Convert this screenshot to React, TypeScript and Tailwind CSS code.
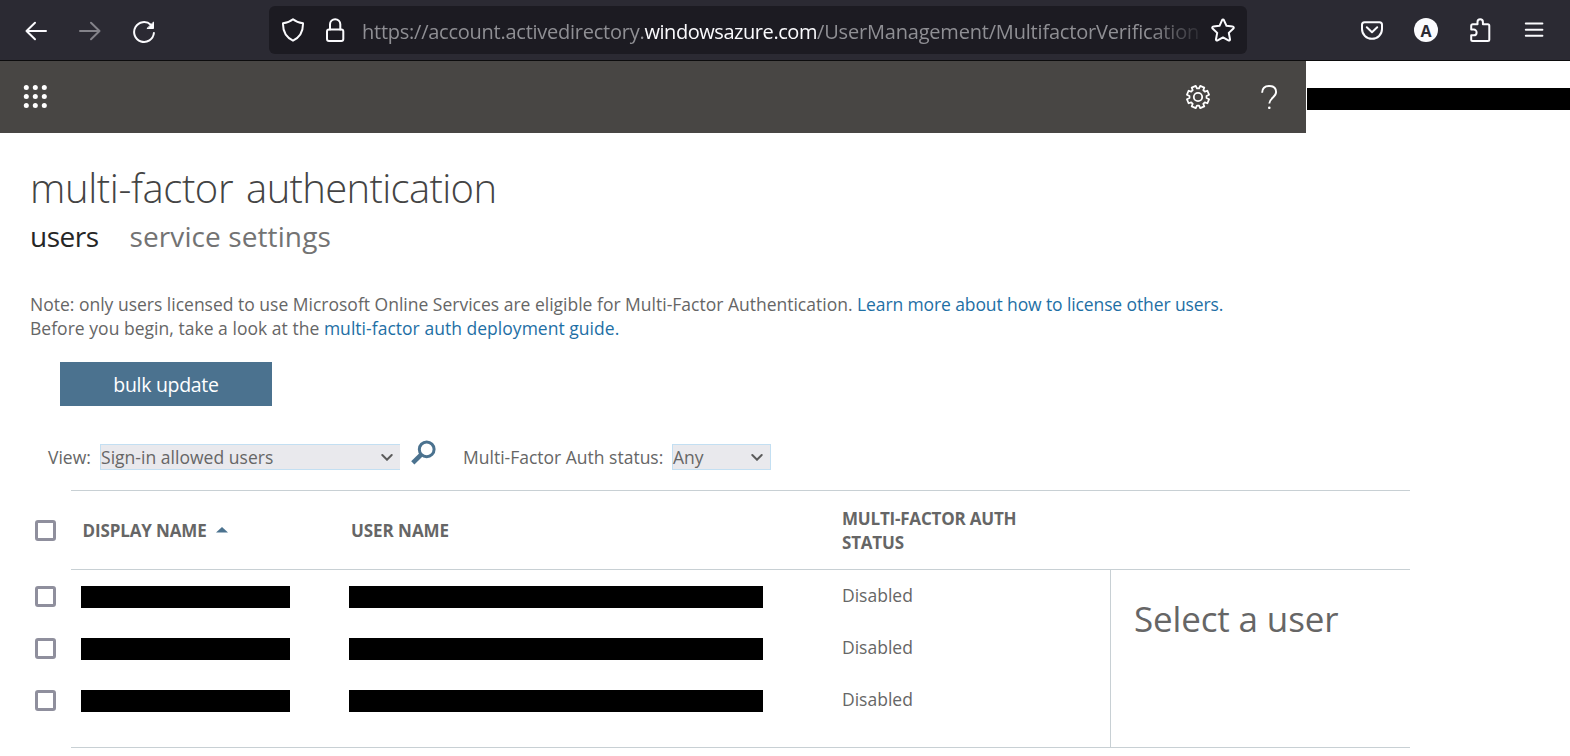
import type { ReactNode } from "react";

const rows = [
  { id: 1, status: "Disabled" },
  { id: 2, status: "Disabled" },
  { id: 3, status: "Disabled" },
];

type IconProps = { className?: string; size?: number; children: ReactNode; width?: number };

function Icon({ className = "", size = 24, width = 2, children }: IconProps) {
  return (
    <svg
      className={`block shrink-0 ${className}`}
      width={size}
      height={size}
      viewBox="0 0 24 24"
      fill="none"
      stroke="currentColor"
      strokeWidth={width}
      strokeLinecap="round"
      strokeLinejoin="round"
    >
      {children}
    </svg>
  );
}

function gearPoints() {
  const pts: string[] = [];
  for (let i = 0; i < 8; i++) {
    const mid = 22.5 + i * 45;
    const corners: [number, number][] = [
      [-15.5, 8.6],
      [-11, 11.3],
      [11, 11.3],
      [15.5, 8.6],
    ];
    for (const [off, r] of corners) {
      const a = ((mid + off) * Math.PI) / 180;
      pts.push(`${(12 + r * Math.cos(a)).toFixed(2)},${(12 + r * Math.sin(a)).toFixed(2)}`);
    }
  }
  return pts.join(" ");
}

function BrowserBar() {
  return (
    <div className="flex h-[61px] items-start border-b border-[#0c0c0d] bg-[#2b2a33] text-[#fbfbfe]">
      <Icon className="mt-[19px] ml-6">
        <path d="M22 12H2.500M11 3.800 2.500 12l8.500 8.200" />
      </Icon>
      <Icon className="mt-[19px] ml-[30px] text-[#84838a]">
        <path d="M2 12h19.500M13 3.800 21.500 12 13 20.200" />
      </Icon>
      <Icon className="mt-5 ml-[30px]">
        <path d="M21.900 13a9.900 9.900 0 1 1-3.100-8.200" />
        <path d="M21.500 2.500v6h-6.200z" fill="currentColor" strokeWidth="1" />
      </Icon>

      <div className="mt-1.5 ml-[113px] flex h-12 w-[978px] items-start rounded-md bg-[#1c1b22]">
        <Icon className="mt-3 ml-3">
          <path d="M12 1.300c2.600 2.200 5.800 3.500 10 4 .2 7.500-3 14-10 17.400C5 19.300 1.800 12.800 2 5.300c4.200-.5 7.400-1.800 10-4z" />
        </Icon>
        <Icon className="mt-3 ml-[18px]">
          <rect x="4" y="11.500" width="16.300" height="11.500" rx="2" />
          <path d="M7 11.500V6.300a5.150 5.150 0 0 1 10.300 0v5.200" />
        </Icon>
        <div className="mt-1 ml-[15px] w-[837px] overflow-hidden font-['Open_Sans',sans-serif] text-[20px] leading-[44px] whitespace-nowrap text-[#8f8f94] [mask-image:linear-gradient(to_right,black_94%,transparent_101%)]">
          <span className="tracking-[-0.25px]">https://account.activedirectory.</span>
          <span className="tracking-[-0.44px] text-[#fbfbfe]">windowsazure.com</span>
          <span className="tracking-[-0.19px]">/UserManagement/MultifactorVerification</span>
        </div>
        <Icon className="mt-3 ml-3">
          <path d="M12 1.600c.5 0 .8.300 1 .7l2.500 5.500 6.200.8c1 .1 1.400 1.200.7 1.900l-4.600 4.400 1.200 6.300c.2 1-.8 1.600-1.600 1.200L12 19.400l-5.400 3c-.8.400-1.800-.2-1.600-1.200l1.200-6.300-4.600-4.400c-.7-.7-.3-1.800.7-1.900l6.200-.8L11 2.300c.2-.4.500-.7 1-.7z" />
        </Icon>
      </div>

      <Icon className="mt-[18px] ml-[113px]">
        <path d="M4.500 4.200h15a2.500 2.500 0 0 1 2.500 2.500V11a10 9.800 0 0 1-20 0V6.700a2.500 2.500 0 0 1 2.500-2.500z" />
        <path d="m6.800 9.300 5.200 4.900 5.200-4.900" />
      </Icon>
      <div className="mt-[18px] ml-[30px] flex size-6 items-center justify-center rounded-full bg-[#fbfbfe] pt-px font-['Open_Sans',sans-serif] text-[16px] leading-none font-bold text-[#2b2a33]">
        A
      </div>
      <Icon className="mt-[18px] ml-[30px]">
        <path d="M3.200 9.500V7.800a1.500 1.500 0 0 1 1.500-1.500h4.800V4a2.700 2.700 0 0 1 5.400 0v2.300h4.900a1.500 1.500 0 0 1 1.500 1.500v13.700a1.500 1.500 0 0 1-1.500 1.500H4.700a1.500 1.500 0 0 1-1.500-1.500v-4.200h2.500a2.900 2.900 0 0 0 0-5.800H3.200z" />
      </Icon>
      <Icon className="mt-[18px] ml-[30px]">
        <path d="M3.800 5.500h16.600M3.800 11.700h16.600M3.800 17.700h16.600" />
      </Icon>
    </div>
  );
}

function SuiteHeader() {
  return (
    <header className="flex h-[72px] items-start bg-white">
      <div className="flex h-[72px] w-[1306px] items-start bg-[#484644] text-white">
        <svg className="mt-6 ml-[23px] block" width="24" height="24" viewBox="0 0 24 24" fill="currentColor">
          {[2.500, 11.500, 20.500].map((y) =>
            [3.300, 12.300, 21.300].map((x) => <circle key={`${x}-${y}`} cx={x} cy={y} r="2.500" />),
          )}
        </svg>
        <Icon className="mt-6 ml-[1139px]" width={1.800}>
          <polygon points={gearPoints()} />
          <circle cx="12" cy="12" r="4.200" />
        </Icon>
        <Icon className="mt-6 ml-[47px]" width={1.900}>
          <path d="M5.100 7.700C5.300 3.400 8 1 12 1c4.300 0 7.100 2.300 7.100 6.100 0 5.400-6.800 6-6.800 11.400" strokeLinecap="butt" />
          <circle cx="12.300" cy="22.800" r="1.300" fill="currentColor" stroke="none" />
        </Icon>
      </div>
      <div className="mt-[27px] ml-px h-[22px] flex-1 bg-black" />
    </header>
  );
}

function Select({ label, className }: { label: string; className: string }) {
  return (
    <div className={`flex h-[26px] items-center justify-between border border-[#c3dff2] bg-[#e9e9ed] ${className}`}>
      <span className="leading-6">{label}</span>
      <svg width="12" height="8" viewBox="0 0 12 8" fill="none" stroke="#5b5b5b" strokeWidth="2" strokeLinecap="round">
        <path d="m1.300 2 4.700 4.700 4.700-4.700" />
      </svg>
    </div>
  );
}

function Checkbox() {
  return <div className="size-[21px] shrink-0 rounded-[3px] border-3 border-[#8f8f9d] bg-white" />;
}

export default function App() {
  return (
    <div className="h-[756px] w-[1570px] overflow-hidden bg-white font-['Open_Sans',sans-serif] text-[17.5px] leading-6 text-[#666666]">
      <BrowserBar />
      <SuiteHeader />

      <main>
        <h1 className="mt-[31px] ml-[30px] text-[40px] leading-[48px] font-light tracking-[-0.4px] text-[#444444] [word-spacing:3px]">
          multi-factor <span className="tracking-[-0.66px]">authentication</span>
        </h1>
        <nav className="mt-[6px] ml-[30px] flex text-[28px] leading-9">
          <span className="w-[99.500px] tracking-[-0.5px] text-[#262626]">users</span>
          <span className="tracking-[0.1px] text-[#737373]">service settings</span>
        </nav>

        <div className="mt-[38px] ml-[30px] whitespace-nowrap">
          <p>
            Note: only users licensed to use Microsoft Online Services are eligible for Multi-Factor Authentication.{" "}
            <a className="tracking-[-0.11px] text-[#1e6fa5]">Learn more about how to license other users.</a>
          </p>
          <p className="tracking-[0.03px]">
            Before you begin, take a look at the <a className="text-[#1e6fa5]">multi-factor auth deployment guide.</a>
          </p>
        </div>

        <button className="mt-[22px] ml-[60px] block h-11 w-[212px] bg-[#4b728f] pt-0.5 text-[19.5px] leading-[42px] tracking-[-0.3px] text-white">
          bulk update
        </button>

        <div className="mt-[34px] flex h-[30px] items-start pl-12">
          <span className="mt-[5px] w-[52px]">View:</span>
          <Select label="Sign-in allowed users" className="mt-1 w-[300px] border-r-0 pr-[7px] tracking-[0.03px]" />
          <svg className="ml-[11px] block" width="25" height="25" viewBox="0 0 25 25" fill="none" stroke="#4b728f">
            <circle cx="15.700" cy="9.300" r="7.400" strokeWidth="3" />
            <path d="m10.200 14.700-8.400 8.200" strokeWidth="4.600" />
          </svg>
          <span className="mt-[5px] ml-[27px] w-[209px]">Multi-Factor Auth status:</span>
          <Select label="Any" className="mt-1 w-[99px] pr-[7px]" />
        </div>

        <div className="mt-5 ml-[71px] h-px w-[1339px] bg-[#c8d0d4]" />

        <div className="flex h-[78px] items-center pl-[35px] text-[17px] font-bold text-[#666666]">
          <Checkbox />
          <div className="ml-[26.500px] flex w-[268.500px] items-center pt-0.5 tracking-[-0.13px]">
            <span>DISPLAY NAME</span>
            <svg className="-mt-[3px] ml-[9px]" width="12" height="6" viewBox="0 0 12 6" fill="#4b728f">
              <path d="M6 0 12 5.500H0z" />
            </svg>
          </div>
          <span className="w-[491px] pt-0.5 tracking-[-0.05px]">USER NAME</span>
          <span className="w-[190px] pt-0.5 tracking-[-0.2px]">MULTI-FACTOR AUTH STATUS</span>
        </div>

        <div className="ml-[71px] h-px w-[1339px] bg-[#c8d0d4]" />

        <div className="flex h-[177px] items-stretch">
          <div className="flex w-[1110px] flex-col gap-[30px] pt-4 pl-[35px]">
            {rows.map((row) => (
              <div key={row.id} className="flex h-[22px] items-start">
                <Checkbox />
                <div className="ml-[25px] h-[22px] w-[209px] bg-black" />
                <div className="ml-[59px] h-[22px] w-[414px] bg-black" />
                <span className="-mt-[3px] ml-[79px]">{row.status}</span>
              </div>
            ))}
          </div>
          <aside className="w-[300px] border-l border-[#c8d0d4] pt-6 pl-[23px]">
            <h2 className="text-[35px] leading-[50px] tracking-[-0.15px] text-[#666666]">Select a user</h2>
          </aside>
        </div>

        <div className="ml-[71px] h-px w-[1339px] bg-[#c8d0d4]" />
      </main>
    </div>
  );
}
